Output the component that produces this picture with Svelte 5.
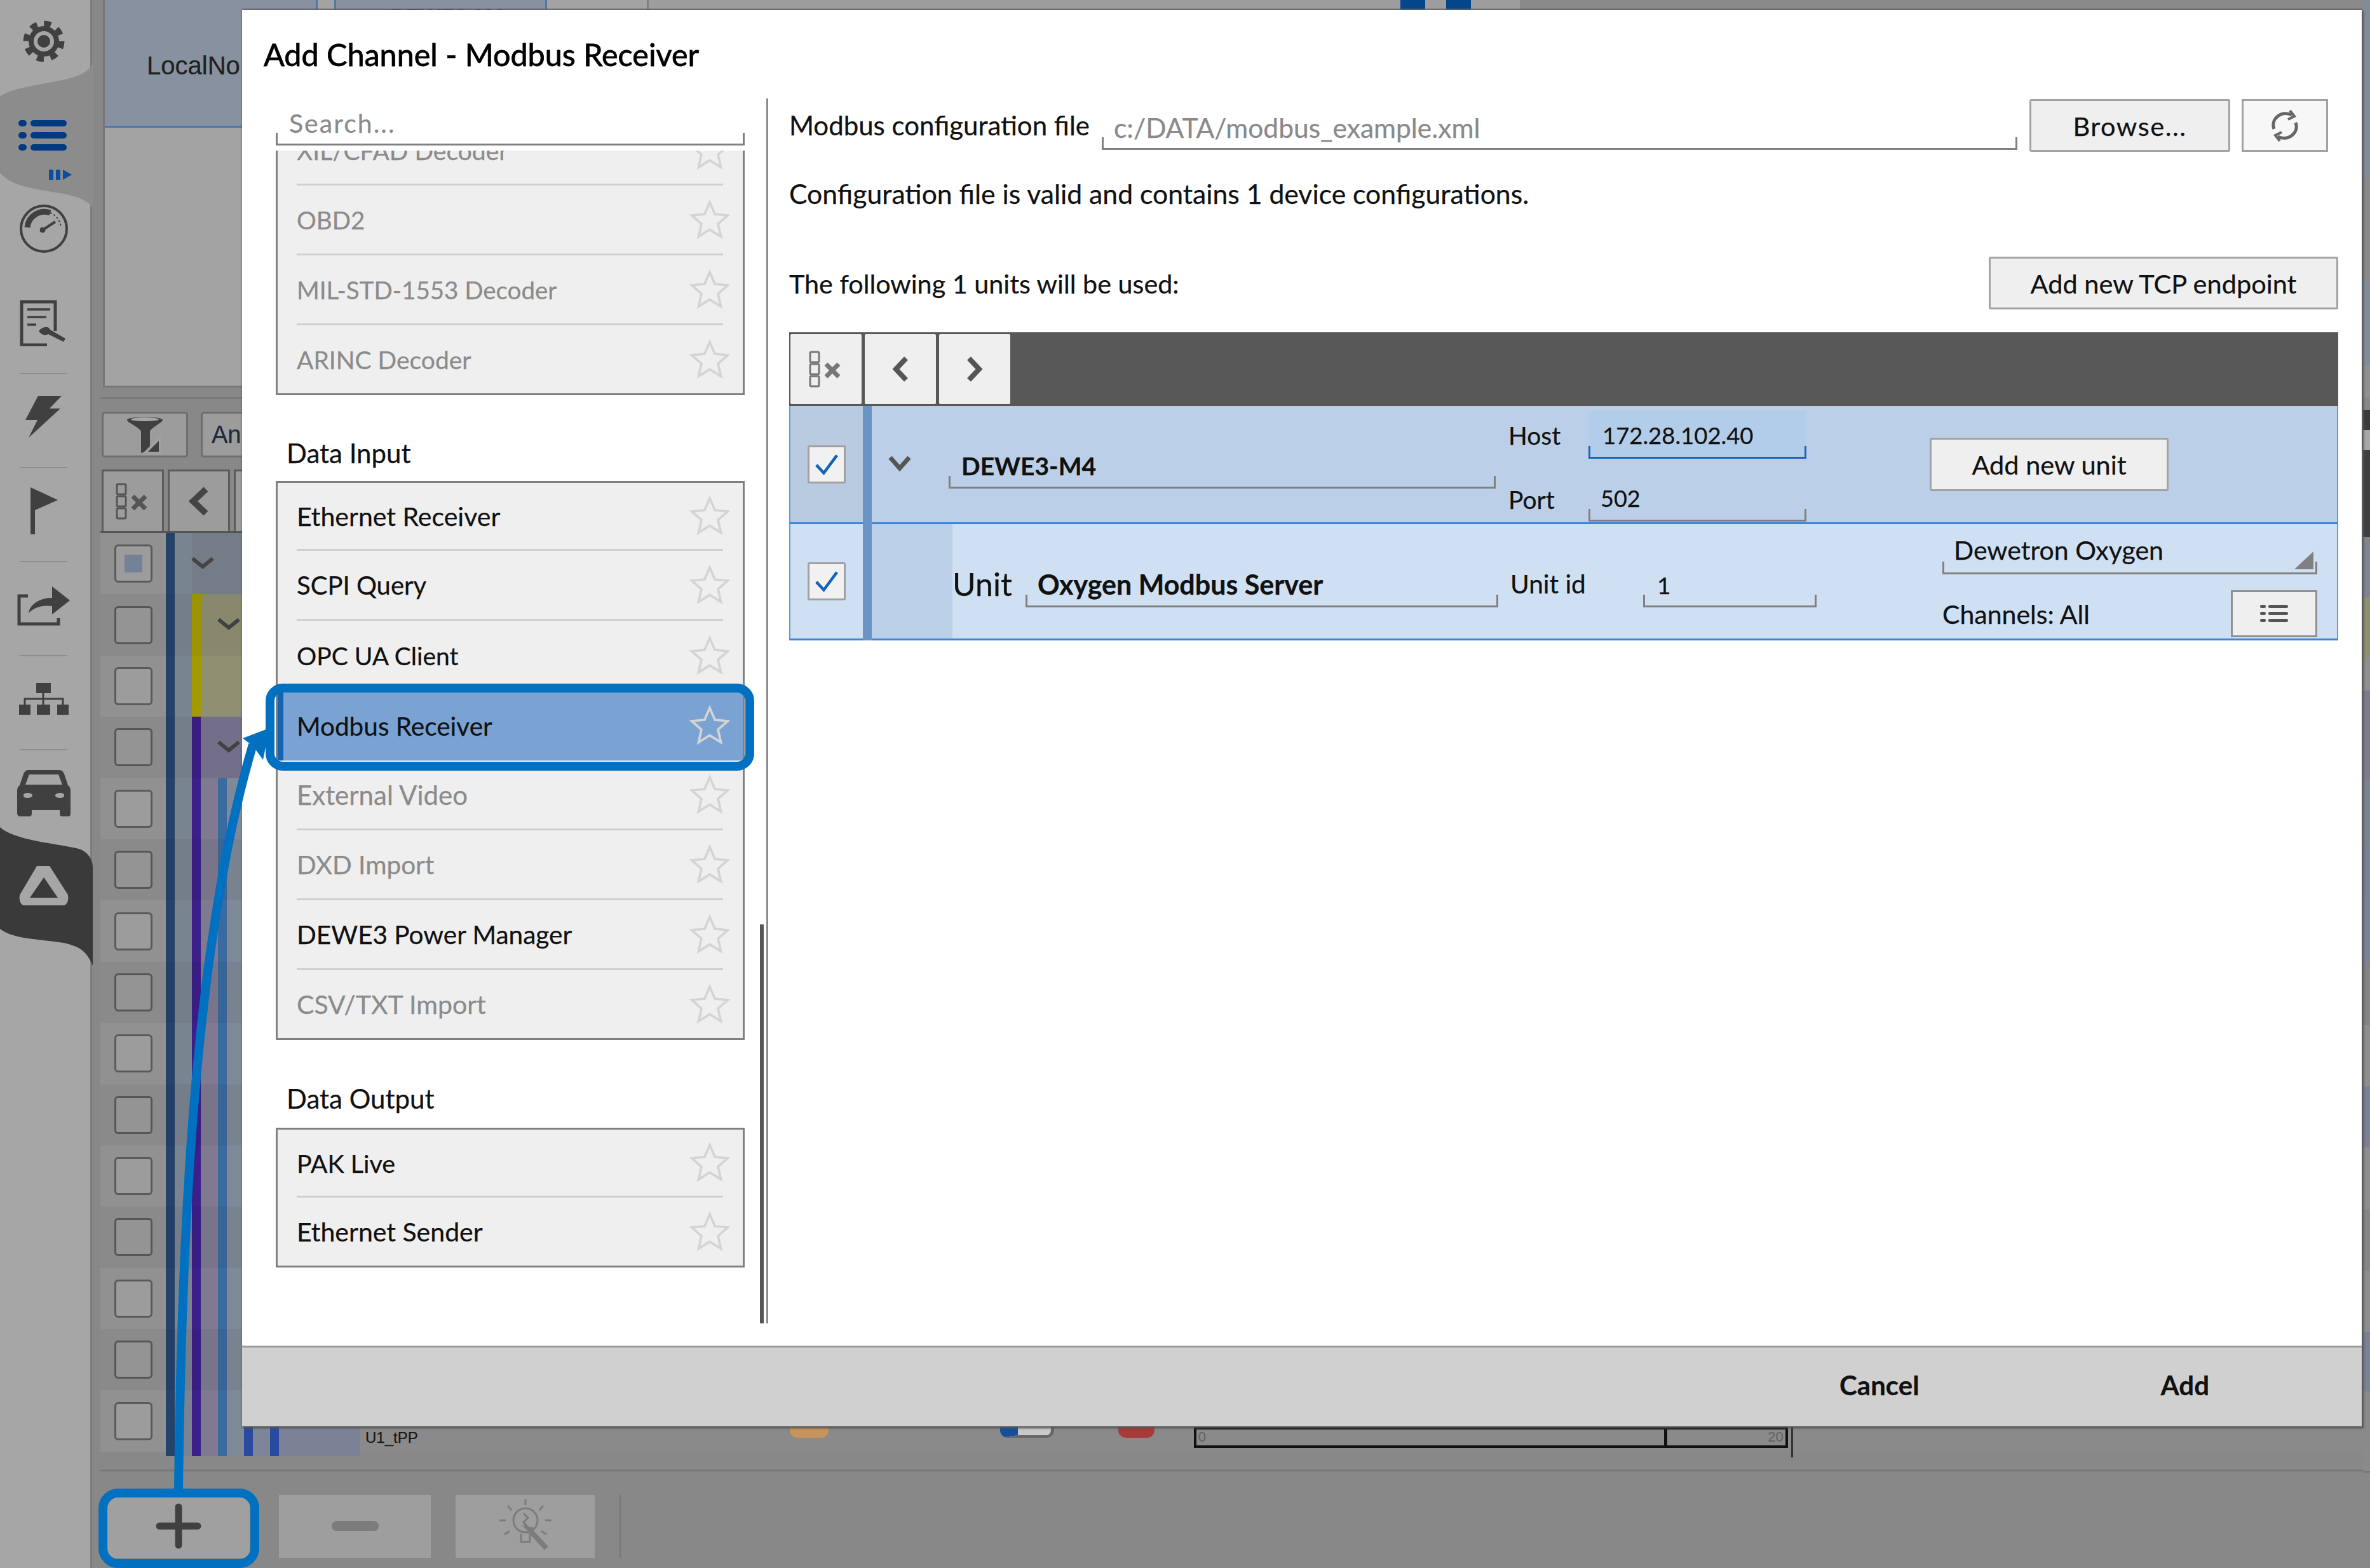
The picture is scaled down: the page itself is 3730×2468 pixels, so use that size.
<script>
	const listA = [
		{ name: 'XIL/CFAD Decoder', size: 39 },
		{ name: 'OBD2', size: 38.5 },
		{ name: 'MIL-STD-1553 Decoder', size: 38.5 },
		{ name: 'ARINC Decoder', size: 39 }
	];
	const listB = [
		{ name: 'Ethernet Receiver', size: 41, on: true },
		{ name: 'SCPI Query', size: 40, on: true },
		{ name: 'OPC UA Client', size: 39, on: true },
		{ name: 'Modbus Receiver', size: 40.5, on: true, selected: true },
		{ name: 'External Video', size: 42 },
		{ name: 'DXD Import', size: 40.5 },
		{ name: 'DEWE3 Power Manager', size: 40.5, on: true },
		{ name: 'CSV/TXT Import', size: 41 }
	];
	const listC = [
		{ name: 'PAK Live', size: 39.5, on: true },
		{ name: 'Ethernet Sender', size: 41, on: true }
	];

	// stripes of the channel tree behind the dialog
	const base = [[14, '#24436a'], [27, '#7a8490']];
	const group = [...base, [14, '#3c1f8a'], [27, '#7f7a90'], [14, '#3a6aa0'], [27, '#7f8a98']];
	const treeRows = Array.from({ length: 15 }, (_, i) => {
		if (i === 0) return { stripes: [...base, [300, '#747c87']], chev: 0 };
		if (i < 3) return { stripes: [...base, [14, '#a39a00'], [300, '#8f8f72']], chev: i === 1 ? 1 : -1 };
		if (i === 3) return { stripes: [...base, [14, '#3c1f8a'], [300, '#7a7590']], chev: 1 };
		if (i === 14) return { stripes: [...group, [14, '#2a4aa0'], [27, '#7f8598'], [14, '#2a4aa0'], [128, '#7b8296']], chev: -1 };
		return { stripes: group, chev: -1 };
	});

	// colour bands seen in the thin gap right of the dialog
	const edge = [
		[280, '#7f8d9b'], [161, '#8a8a8a'], [134, '#7f8d9b'], [50, '#909090'], [20, '#888'],
		[32, '#3a3a3a'], [31, '#a8a8a8'], [137, '#3f3f3f'], [95, '#7e8590'], [95, '#8f8f72'],
		[52, '#8f8f8f'], [141, '#7f7a90'], [98, '#7a8490'], [96, '#7b8296'], [95, '#7b8296'],
		[96, '#848484'], [97, '#8e8e8e'], [96, '#7b8296'], [97, '#8e8e8e'], [97, '#868686'],
		[96, '#8e8e8e'], [94, '#7b8296'], [125, '#8a8a8a'], [3, '#777'], [150, '#888']
	];
</script>

{#snippet star()}
	<svg class="star" viewBox="0 0 60 60"><path d="M30 4l7.6 17.6 19 1.8-14.4 12.6 4.3 18.7L30 44.4 13.5 54.7l4.3-18.7L3.4 23.4l19-1.8z" /></svg>
{/snippet}

{#snippet entry(it)}
	<div class="item" class:off={!it.on} class:selected={it.selected}>
		<div class="inner"><span style="font-size:{it.size}px">{it.name}</span>{@render star()}</div>
	</div>
{/snippet}

{#snippet colsIcon(color)}
	<svg class="cols" viewBox="0 0 60 60" fill="none" stroke={color}>
		<rect x="5" y="3" width="14" height="16" rx="2" stroke-width="3" />
		<rect x="5" y="22" width="14" height="16" rx="2" stroke-width="3" />
		<rect x="5" y="41" width="14" height="16" rx="2" stroke-width="3" />
		<path d="M30 22l20 20M50 22L30 42" stroke-width="7" />
	</svg>
{/snippet}

{#snippet check()}
	<span class="check">
		<svg viewBox="0 0 60 60" fill="none"><path d="M12 31l13 14 23-31" stroke="#1264b8" stroke-width="5" /></svg>
	</span>
{/snippet}

<div class="screen">
	<aside class="sidebar">
		<svg class="tab" viewBox="0 0 146 1530" fill="#8c8c8c">
			<path d="M0 152C20 135 100 130 125 118 138 112 146 105 146 95L146 330C144 318 125 310 100 305 60 298 20 295 0 272Z" />
			<path fill="#3a3a3a" d="M0 1302C20 1322 90 1328 120 1335 135 1338 146 1350 146 1365L146 1520C135 1495 125 1490 100 1484 60 1478 20 1478 0 1462Z" />
		</svg>
		<div class="nav" style="height:130px">
			<svg width="70" height="66" viewBox="0 0 70 66" fill="#404040">
				<circle cx="35" cy="33" r="24" />
				<circle cx="35" cy="33" r="28" fill="none" stroke="#404040" stroke-width="9" stroke-dasharray="11 11" />
				<circle cx="35" cy="33" r="16" fill="#a6a6a6" />
				<circle cx="35" cy="33" r="10" />
			</svg>
		</div>
		<div class="nav active" style="height:170px">
			<svg width="90" height="100" viewBox="0 0 90 100" fill="#003a80">
				<rect x="0" y="0" width="13" height="10" rx="5" /><rect x="19" y="0" width="57" height="10" rx="5" />
				<rect x="0" y="19" width="13" height="10" rx="5" /><rect x="19" y="19" width="57" height="10" rx="5" />
				<rect x="0" y="38" width="13" height="10" rx="5" /><rect x="19" y="38" width="57" height="10" rx="5" />
				<rect x="48" y="78" width="7" height="16" fill="#0a4f9e" /><rect x="59" y="78" width="7" height="16" fill="#0a4f9e" />
				<path d="M70 78l14 8-14 8z" fill="#0a4f9e" />
			</svg>
		</div>
		<div class="nav" style="height:141px;padding-bottom:22px">
			<svg width="80" height="80" viewBox="0 0 80 80" fill="none" stroke="#404040">
				<circle cx="40" cy="40" r="36" stroke-width="4" />
				<path d="M14 38A27 27 0 0 1 50 15" stroke-width="9" />
				<path d="M50 15A27 27 0 0 1 67 38" stroke-width="2" stroke-dasharray="3 3" />
				<path d="M38 42l20-13" stroke-width="4" /><circle cx="38" cy="42" r="4" fill="#404040" />
			</svg>
		</div>
		<div class="nav sep">
			<svg width="76" height="74" viewBox="0 0 76 74" fill="none" stroke="#404040">
				<path d="M56 50V4H3v68h40" stroke-width="5" />
				<path d="M12 16h36M12 28h30M12 40h14" stroke-width="3.5" />
				<path d="M30 50c6-8 16-8 18-2l24 14-3 5-24-12c-6 3-12 0-15-5z" fill="#404040" stroke="none" />
			</svg>
		</div>
		<div class="nav sep">
			<svg width="58" height="68" viewBox="0 0 58 68" fill="#404040"><path d="M20 1h37L38 21h17L5 67l14-28H0z" /></svg>
		</div>
		<div class="nav sep">
			<svg width="44" height="74" viewBox="0 0 44 74" fill="#404040"><path d="M1 0l43 20L8 36v38H1z" /></svg>
		</div>
		<div class="nav sep">
			<svg width="84" height="68" viewBox="0 0 84 68" fill="none" stroke="#404040">
				<path d="M17 20H3v44h62v-9" stroke-width="5" />
				<path d="M18 47c2-14 18-24 37-24V5l28 22-28 22V36c-16-2-28 2-37 11z" fill="#404040" stroke="none" />
			</svg>
		</div>
		<div class="nav sep">
			<svg width="78" height="50" viewBox="0 0 78 50" fill="#404040">
				<rect x="27" y="0" width="23" height="16" /><rect x="0" y="34" width="18" height="16" />
				<rect x="28" y="34" width="21" height="16" /><rect x="60" y="34" width="18" height="16" />
				<path d="M38 16v18M9 34v-9h60v9" fill="none" stroke="#404040" stroke-width="3" />
			</svg>
		</div>
		<div class="nav sep last">
			<svg width="84" height="76" viewBox="0 0 84 76" fill="#404040">
				<path fill-rule="evenodd" d="M18 2h48c4 0 6 2 8 6l6 18c3 2 4 5 4 9v35c0 3-1 5-4 5h-9c-3 0-4-2-4-5v-5H23v5c0 3-1 5-4 5H5c-3 0-5-2-5-5V35c0-4 1-7 4-9l6-18c2-4 4-6 8-6zm1 7l-6 16h58l-6-16zM16 38c-3 0-6 1-6 4s3 4 6 4 8-1 8-4-5-4-8-4zm52 0c-3 0-8 1-8 4s5 4 8 4 6-1 6-4-3-4-6-4z" />
			</svg>
		</div>
		<div class="nav delta">
			<svg width="78" height="66" viewBox="0 0 78 66"><path fill="#a6a6a6" fill-rule="evenodd" d="M28 2h20l28 44c3 5 1 18-6 18H8C1 64-1 51 2 46zM39 20L17 52h44z" /></svg>
		</div>
	</aside>

	<main class="main">
		<section class="top">
			<div class="node"><span>LocalNo</span></div>
			<div class="node second"><b>DEWE3-M4</b></div>
			<div class="slot"></div>
			<div class="blocks"><i></i><i></i></div>
			<div class="top-rest"></div>
		</section>

		<div class="bar-one">
			<span class="old-btn filter">
				<svg width="56" height="62" viewBox="0 0 56 62" fill="#404040">
					<path d="M0 8C0 2 56 2 56 8 56 12 38 20 36 26v30L22 60V26C20 20 0 12 0 8z" />
					<ellipse cx="28" cy="7" rx="22" ry="3" fill="#a6a6a6" />
					<path d="M28 60l24-24v24z" fill="#404040" stroke="#a0a0a0" stroke-width="4" />
				</svg>
			</span>
			<span class="old-btn an">An</span>
		</div>
		<div class="bar-two">
			<span class="old-tool">{@render colsIcon('#555')}</span>
			<span class="old-tool"><svg width="34" height="46" viewBox="0 0 34 46" fill="none" stroke="#444" stroke-width="10"><path d="M28 4L8 23l20 19" /></svg></span>
			<span class="old-tool"></span>
		</div>

		<div class="tree">
			{#each treeRows as row, i}
				<div class="tree-row">
					<div class="cell"><span class="old-check" class:mixed={i === 0}></span></div>
					<div class="stripes">
						{#each row.stripes as s}<span style="width:{s[0]}px;background:{s[1]}"></span>{/each}
						{#if row.chev >= 0}
							<svg class="tree-chev" style="left:{row.chev ? 81 : 40}px" width="36" height="20" viewBox="0 0 36 20" fill="none" stroke="#444" stroke-width="6"><path d="M2 3l16 13L34 3" /></svg>
						{/if}
					</div>
					{#if i === 14}
						<span class="chan">U1_tPP</span>
						<span class="dot orange"></span>
						<span class="dot tick"></span>
						<span class="dot blue"></span>
						<span class="dot red"></span>
						<span class="meter"><span>0</span><i></i><span class="end">20</span></span>
						<span class="cursor"></span>
					{/if}
				</div>
			{/each}
		</div>

		<div class="rule"></div>

		<div class="bottom">
			<span class="low-btn plus"><svg width="72" height="72" viewBox="0 0 72 72" stroke="#404040" stroke-width="11" stroke-linecap="round"><path d="M6 36h60M36 6v60" /></svg></span>
			<span class="low-btn minus"><svg width="74" height="16" viewBox="0 0 74 16"><rect width="74" height="16" rx="8" fill="#7c7c7c" /></svg></span>
			<span class="low-btn bulb">
				<svg width="86" height="90" viewBox="0 0 86 90" fill="none" stroke="#7c7c7c" stroke-width="3">
					<circle cx="43" cy="36" r="19" />
					<path d="M36 57v13h14V57M43 3v9M15 13l6 7M71 13l-6 7M2 36h10M74 36h10M10 58l8-5M76 58l-8-5M40 25l7 7-7 7 6 7" />
					<path d="M50 52l26 28" stroke-width="8" /><path d="M42 46l12 2 2 12z" fill="#7c7c7c" />
				</svg>
			</span>
			<span class="low-sep"></span>
		</div>
	</main>

	<div class="edge">
		{#each edge as e}<span style="height:{e[0]}px;background:{e[1]}"></span>{/each}
	</div>

	<div class="dialog">
		<h1>Add Channel - Modbus Receiver</h1>
		<div class="body">
			<div class="left">
				<div class="search field"><span>Search...</span></div>
				<div class="scroll">
					<div class="panel first">
						{#each listA as it}{@render entry(it)}{/each}
					</div>
					<h2 class="h-input">Data Input</h2>
					<div class="panel">
						{#each listB as it}{@render entry(it)}{/each}
					</div>
					<h2>Data Output</h2>
					<div class="panel">
						{#each listC as it}{@render entry(it)}{/each}
					</div>
				</div>
				<div class="scrollbar"></div>
			</div>

			<div class="right">
				<div class="file-row">
					<span class="label">Modbus configuration file</span>
					<div class="field path"><span>c:/DATA/modbus_example.xml</span></div>
					<button class="browse">Browse...</button>
					<button class="refresh">
						<svg width="54" height="50" viewBox="0 0 54 50" fill="none" stroke="#666" stroke-width="5">
							<path d="M10 30C4 14 22 0 38 8" /><path d="M44 20c6 16-12 30-28 22" />
							<path d="M35 1l7 9-10 5M19 49l-7-9 10-5" stroke-width="4" />
						</svg>
					</button>
				</div>
				<p class="valid">Configuration file is valid and contains 1 device configurations.</p>
				<div class="used-row">
					<span class="used">The following 1 units will be used:</span>
					<button class="tcp">Add new TCP endpoint</button>
				</div>

				<div class="table">
					<div class="toolbar">
						<span class="tool">{@render colsIcon('#777')}</span>
						<span class="tool"><svg width="30" height="40" viewBox="0 0 30 40" fill="none" stroke="#555" stroke-width="8"><path d="M24 3L8 20l16 17" /></svg></span>
						<span class="tool"><svg width="30" height="40" viewBox="0 0 30 40" fill="none" stroke="#555" stroke-width="8"><path d="M6 3l16 17L6 37" /></svg></span>
					</div>

					<div class="unit device">
						<div class="tick-cell">{@render check()}</div>
						<div class="stem"></div>
						<div class="expand"><svg width="36" height="26" viewBox="0 0 36 26" fill="none" stroke="#555" stroke-width="7"><path d="M3 4l15 17L33 4" /></svg></div>
						<div class="field name"><b>DEWE3-M4</b></div>
						<div class="conn">
							<span>Host</span>
							<div class="field host"><span>172.28.102.40</span></div>
							<span class="port">Port</span>
							<div class="field portval"><span>502</span></div>
						</div>
						<button class="new-unit">Add new unit</button>
					</div>

					<div class="unit server">
						<div class="tick-cell">{@render check()}</div>
						<div class="stem"></div>
						<div class="gutter"></div>
						<span class="unit-word">Unit</span>
						<div class="field unit-name"><b>Oxygen Modbus Server</b></div>
						<span class="unit-id">Unit id</span>
						<div class="field id-val"><span>1</span></div>
						<div class="options">
							<div class="field select"><span>Dewetron Oxygen</span><i></i></div>
							<div class="channels">
								<span>Channels: All</span>
								<button class="list-btn">
									<svg width="44" height="28" viewBox="0 0 44 28" fill="#555">
										<rect y="0" width="9" height="5" rx="2.5" /><rect x="13" y="0" width="31" height="5" rx="2.5" />
										<rect y="11" width="9" height="5" rx="2.5" /><rect x="13" y="11" width="31" height="5" rx="2.5" />
										<rect y="22" width="9" height="5" rx="2.5" /><rect x="13" y="22" width="31" height="5" rx="2.5" />
									</svg>
								</button>
							</div>
						</div>
					</div>
				</div>
			</div>
		</div>
		<footer>
			<span>Cancel</span>
			<span>Add</span>
		</footer>
	</div>

	<!-- callouts drawn on top of the screenshot -->
	<svg class="callouts" width="3730" height="2468" viewBox="0 0 3730 2468" fill="none" stroke="#0070c0" stroke-width="14">
		<rect x="425" y="1083" width="755" height="123" rx="20" />
		<rect x="162" y="2350" width="239" height="111" rx="24" />
		<path d="M281 2345C285 2000 300 1500 398 1172" />
		<path d="M382 1162L424 1146 414 1196 398 1174Z" fill="#0070c0" stroke="none" />
	</svg>
</div>

<style>
	:global(body) {
		margin: 0;
	}

	.screen {
		position: relative;
		display: flex;
		width: 3730px;
		height: 2468px;
		overflow: hidden;
		background: #888;
		font-family: "Lato", "Noto Sans", sans-serif;
		font-size: 41px;
		color: #111;
		-webkit-text-stroke: 0.25px currentColor;
	}

	/* left rail */
	.sidebar {
		position: relative;
		flex: none;
		width: 142px;
		height: 2468px;
		background: #a6a6a6;
		border-right: 3px solid #7c7c7c;
	}

	.tab {
		position: absolute;
		left: 0;
		top: 0;
		width: 146px;
		height: 1530px;
	}

	.nav {
		position: relative;
		display: flex;
		align-items: center;
		justify-content: center;
		box-sizing: border-box;
		padding-right: 4px;
	}

	.active {
		padding: 48px 0 0 0;
		padding-left: 6px;
	}

	.sep {
		height: 148px;
		padding-bottom: 14px;
	}

	.sep::after {
		content: '';
		position: absolute;
		left: 31px;
		right: 36px;
		bottom: 0;
		border-bottom: 2px solid #8e8e8e;
	}

	.last::after {
		display: none;
	}

	.delta {
		height: 290px;
		padding-bottom: 190px;
		padding-top: 30px;
	}

	/* app behind the dialog */
	.main {
		flex: none;
		width: 3574px;
		height: 2468px;
		display: flex;
		flex-direction: column;
		padding-left: 13px;
		box-sizing: border-box;
	}

	.top {
		display: flex;
		flex: none;
		height: 610px;
		box-sizing: border-box;
		border-left: 3px solid #777;
		border-bottom: 3px solid #777;
		background: #a3a3a3;
		margin-left: 4px;
	}

	.node {
		flex: none;
		width: 335px;
		height: 201px;
		box-sizing: border-box;
		background: #87919f;
		border-bottom: 3px solid #4a78b0;
		border-right: 3px solid #4a78b0;
		padding: 81px 0 0 66px;
		font-family: "Liberation Sans", sans-serif;
		font-size: 40px;
		color: #20201c;
		white-space: nowrap;
		overflow: hidden;
	}

	.second {
		margin-left: 26px;
		border-left: 3px solid #4a78b0;
		padding: 6px 0 0 85px;
		font-size: 34px;
		color: #111;
	}

	.slot {
		flex: none;
		width: 157px;
		border-right: 3px solid #808080;
	}

	.blocks {
		flex: none;
		display: flex;
		width: 1371px;
		padding-left: 1183px;
		gap: 33px;
		box-sizing: border-box;
		background: #9e9e9e;
	}

	.blocks i {
		width: 39px;
		height: 40px;
		background: #04468c;
	}

	.top-rest {
		flex: 1;
		background: #8a8a8a;
	}

	.bar-one {
		margin-top: 15px;
		border-top: 3px solid #7a7a7a;
		padding: 20px 0 0 2px;
		display: flex;
		gap: 20px;
		height: 92px;
		box-sizing: content-box;
	}

	.old-btn {
		display: flex;
		align-items: center;
		justify-content: center;
		height: 72px;
		box-sizing: border-box;
		background: #9c9c9c;
		border: 3px solid #6e6e6e;
		border-radius: 5px;
	}

	.filter {
		width: 136px;
	}

	.an {
		width: 300px;
		justify-content: flex-start;
		padding-left: 14px;
		font-family: "Liberation Sans", sans-serif;
		font-size: 38px;
		color: #1d2a3c;
	}

	.bar-two {
		display: flex;
		gap: 6px;
		height: 100px;
		margin-top: -1px;
		padding-left: 2px;
		border-bottom: 3px solid #555;
		box-sizing: border-box;
	}

	.old-tool {
		display: flex;
		align-items: center;
		justify-content: center;
		width: 98px;
		box-sizing: border-box;
		background: #9c9c9c;
		border: 3px solid #5c5c5c;
		border-bottom: 0;
	}

	.cols {
		width: 60px;
		height: 60px;
	}

	.tree {
		flex: none;
	}

	.tree-row {
		position: relative;
		display: flex;
		height: 96.4px;
		background: #8a8a8a;
	}

	.tree-row:nth-child(even) {
		background: #848484;
	}

	.tree-row:nth-child(even) .stripes,
	.tree-row:nth-child(even) .cell {
		filter: brightness(0.95);
	}

	.cell {
		flex: none;
		width: 103px;
		display: flex;
		align-items: center;
		justify-content: center;
		background: #919191;
	}

	.old-check {
		width: 60px;
		height: 60px;
		box-sizing: border-box;
		background: #9c9c9c;
		border: 3px solid #5a5a5a;
		border-radius: 6px;
	}

	.mixed {
		background:
			linear-gradient(#738296, #738296) center / 28px 28px no-repeat,
			#9c9c9c;
	}

	.stripes {
		position: relative;
		display: flex;
		flex: none;
		width: 307px;
		height: 100%;
	}

	.stripes span {
		flex: none;
		height: 100%;
	}

	.tree-row:last-child .stripes {
		height: 104px;
	}

	.tree-chev {
		position: absolute;
		top: 37px;
	}

	.chan {
		margin: 60px 0 0 7px;
		font-family: "Liberation Sans", sans-serif;
		font-size: 24px;
		line-height: 30px;
		color: #181818;
	}

	.dot {
		flex: none;
		align-self: flex-end;
		margin-bottom: 22px;
		height: 60px;
	}

	.orange {
		width: 61px;
		margin-left: 585px;
		background: #c8945c;
		border-radius: 0 0 12px 12px;
	}

	.tick {
		width: 4px;
		height: 30px;
		margin-left: 138px;
		margin-bottom: 42px;
		background: #666;
	}

	.blue {
		width: 85px;
		margin-left: 128px;
		box-sizing: border-box;
		background: #c9c9c9;
		border-left: 28px solid #12509c;
		border-right: 5px solid #666;
		border-bottom: 4px solid #666;
		border-radius: 0 0 12px 12px;
	}

	.red {
		width: 57px;
		margin-left: 101px;
		background: #a83a38;
		border-radius: 0 0 12px 12px;
	}

	.meter {
		flex: none;
		align-self: flex-end;
		position: relative;
		display: flex;
		justify-content: space-between;
		align-items: center;
		width: 935px;
		height: 33px;
		margin: 0 0 6px 62px;
		box-sizing: border-box;
		border: 4px solid #111;
		font-family: "Liberation Sans", sans-serif;
		font-size: 22px;
		color: #666;
		padding: 0 3px;
	}

	.meter i {
		position: absolute;
		left: 736px;
		top: 0;
		width: 5px;
		height: 100%;
		background: #111;
	}

	.cursor {
		flex: none;
		width: 3px;
		height: 60px;
		align-self: flex-end;
		margin: 0 0 -9px 5px;
		background: #333;
	}

	.rule {
		margin-top: 28px;
		height: 3px;
		background: #777;
	}

	.bottom {
		display: flex;
		gap: 39px;
		padding: 37px 0 0 11px;
	}

	.low-btn {
		display: flex;
		align-items: center;
		justify-content: center;
		height: 99px;
		background: #a0a0a0;
	}

	.plus {
		width: 224px;
		margin-right: 7px;
	}

	.minus {
		width: 239px;
		background: #9e9e9e;
	}

	.bulb {
		width: 219px;
		background: #9e9e9e;
	}

	.low-sep {
		width: 2px;
		height: 99px;
		background: #777;
	}

	.edge {
		flex: none;
		width: 11px;
		display: flex;
		flex-direction: column;
	}

	.edge span {
		flex: none;
	}

	/* dialog */
	.dialog {
		position: absolute;
		left: 381px;
		top: 16px;
		width: 3336px;
		height: 2229px;
		display: flex;
		flex-direction: column;
		background: #fff;
		box-shadow: 2px 2px 3px 1px #555, 0 -2px 2px #666;
	}

	h1 {
		flex: none;
		height: 139px;
		margin: 0;
		padding: 43px 0 0 34px;
		box-sizing: border-box;
		font-size: 48.5px;
		font-weight: 400;
		line-height: 52px;
		color: #000;
		-webkit-text-stroke: 0.8px #000;
	}

	.body {
		flex: 1;
		display: flex;
		min-height: 0;
	}

	.left {
		position: relative;
		flex: none;
		width: 828px;
		height: 1928px;
		padding-left: 53px;
		box-sizing: border-box;
		border-right: 3px solid #8a8a8a;
	}

	.field {
		position: relative;
		display: flex;
		align-items: flex-end;
		box-sizing: border-box;
		border-bottom: 3px solid #808080;
	}

	.field::before,
	.field::after {
		content: '';
		position: absolute;
		bottom: 0;
		width: 3px;
		height: 17px;
		background: #808080;
	}

	.field::before {
		left: 0;
	}

	.field::after {
		right: 0;
	}

	.search {
		width: 738px;
		height: 74px;
		padding: 0 0 8px 21px;
		color: #8a8a8a;
		letter-spacing: 2px;
	}

	.scroll {
		width: 738px;
		height: 1846px;
		margin-top: 8px;
		overflow: hidden;
	}

	.panel {
		box-sizing: border-box;
		width: 738px;
		border: 3px solid #808080;
		background: #efefef;
	}

	.panel.first {
		margin-top: -55px;
	}

	.item {
		height: 110px;
		padding: 0 31px 0 30px;
		box-sizing: border-box;
	}

	.item:first-child,
	.item:last-child {
		height: 107px;
	}

	.inner {
		display: flex;
		align-items: center;
		justify-content: space-between;
		height: 100%;
		box-sizing: border-box;
		border-bottom: 3px solid #cfcfcf;
	}

	.item:last-child .inner,
	.item.selected .inner {
		border-bottom: 0;
	}

	.item:has(+ .selected) .inner {
		border-bottom: 0;
	}

	.off {
		color: #8b8b8b;
	}

	.selected {
		background: #7aa3d3;
		border-left: 9px solid #1563b4;
		padding-left: 21px;
	}

	.star {
		width: 64px;
		height: 64px;
		margin-right: -11px;
		fill: none;
		stroke: #d4d4d4;
		stroke-width: 3.5;
	}

	h2 {
		margin: 0;
		height: 138px;
		padding: 67px 0 0 17px;
		box-sizing: border-box;
		font-size: 42px;
		font-weight: 400;
		line-height: 50px;
	}

	.h-input {
		height: 135px;
		padding-top: 66px;
	}

	.scrollbar {
		position: absolute;
		right: 4px;
		bottom: 0;
		width: 6px;
		height: 628px;
		background: #555;
	}

	.right {
		flex: 1;
		padding: 1px 37px 0 33px;
		min-width: 0;
	}

	button {
		display: block;
		padding: 0;
		box-sizing: border-box;
		background: #efefef;
		border: 3px solid #a2a2a2;
		border-radius: 3px;
		font: inherit;
		font-size: 41.5px;
		color: #111;
		-webkit-text-stroke: inherit;
	}

	.file-row {
		display: flex;
		align-items: flex-start;
		height: 83px;
	}

	.label {
		width: 492px;
		flex: none;
		padding-top: 16px;
		line-height: 50px;
		font-size: 42px;
		white-space: nowrap;
	}

	.path {
		width: 1441px;
		height: 62px;
		margin-top: 18px;
		padding: 0 0 7px 19px;
		color: #8a8a8a;
		font-size: 42.5px;
	}

	.browse {
		width: 316px;
		height: 83px;
		margin-left: 19px;
		letter-spacing: 1.5px;
	}

	.refresh {
		display: flex;
		align-items: center;
		justify-content: center;
		width: 136px;
		height: 83px;
		margin-left: 18px;
		background: #f7f7f7;
		border-radius: 0;
	}

	.valid {
		margin: 41px 0 0;
		line-height: 50px;
		font-size: 42.7px;
	}

	.used {
		font-size: 41.3px;
	}

	.used-row {
		display: flex;
		align-items: center;
		justify-content: space-between;
		margin-top: 74px;
	}

	.tcp {
		width: 550px;
		height: 83px;
	}

	.table {
		margin-top: 36px;
		width: 2438px;
	}

	.toolbar {
		display: flex;
		gap: 5px;
		height: 116px;
		padding: 3px 2px;
		box-sizing: border-box;
		background: #585858;
	}

	.tool {
		display: flex;
		align-items: center;
		justify-content: center;
		width: 112px;
		background: #efefef;
		border-radius: 2px;
	}

	.unit {
		display: flex;
		box-sizing: border-box;
		border-right: 2px solid #5b9be0;
		border-left: 2px solid #5b9be0;
		border-bottom: 3px solid #3a86da;
	}

	.device {
		height: 186px;
		background: #bbd0e8;
	}

	.server {
		height: 183px;
		background: #cfe0f3;
	}

	.tick-cell {
		flex: none;
		display: flex;
		align-items: center;
		justify-content: center;
		width: 114px;
	}

	.device .tick-cell {
		background: #b9cbe0;
	}

	.check {
		display: block;
		width: 60px;
		height: 60px;
		box-sizing: border-box;
		background: #f1f1f1;
		border: 3px solid #a0a0a0;
		border-radius: 3px;
	}

	.check svg {
		display: block;
		width: 54px;
		height: 54px;
	}

	.stem {
		flex: none;
		width: 14px;
		margin-bottom: -3px;
		background: #6a94c6;
	}

	.expand {
		flex: none;
		display: flex;
		justify-content: center;
		width: 88px;
		padding: 77px 33px 0 0;
		box-sizing: content-box;
		height: 40px;
	}

	.name {
		flex: none;
		width: 861px;
		height: 60px;
		margin-top: 70px;
		padding: 0 0 10px 20px;
		font-size: 39px;
	}

	b {
		font-weight: 700;
	}

	.conn {
		flex: none;
		display: grid;
		grid-template-columns: 126px 343px;
		grid-template-rows: 75px 71px;
		row-gap: 28px;
		align-items: center;
		margin: 8px 0 0 20px;
		height: 174px;
		font-size: 39px;
	}

	.port {
		margin-top: 1px;
	}

	.host {
		height: 75px;
		padding: 0 0 12px 22px;
		background: #b2cdea;
		border-bottom-color: #1565c0;
		font-size: 36.5px;
	}

	.host::before,
	.host::after {
		background: #1565c0;
	}

	.portval {
		height: 71px;
		padding: 0 0 12px 19px;
		font-size: 36px;
	}

	.new-unit {
		flex: none;
		align-self: center;
		width: 376px;
		height: 84px;
		margin-left: 194px;
	}

	.gutter {
		flex: none;
		width: 127px;
		background: #bbd0e8;
	}

	.unit-word {
		flex: none;
		width: 115px;
		padding: 66px 0 0 0;
		box-sizing: border-box;
		font-size: 50px;
		line-height: 56px;
	}

	.unit-name {
		flex: none;
		width: 744px;
		height: 60px;
		margin-top: 71px;
		padding: 0 0 8px 19px;
		font-size: 43px;
	}

	.unit-id {
		flex: none;
		width: 228px;
		padding: 69px 0 0 19px;
		box-sizing: border-box;
		line-height: 50px;
		font-size: 40.5px;
	}

	.id-val {
		flex: none;
		width: 273px;
		height: 60px;
		margin-top: 71px;
		padding: 0 0 10px 22px;
		font-size: 37px;
	}

	.options {
		flex: none;
		width: 590px;
		margin: 19px 0 0 198px;
	}

	.select {
		height: 60px;
		padding: 0 0 11px 18px;
	}

	.select i {
		position: absolute;
		right: 6px;
		bottom: 5px;
		width: 0;
		height: 0;
		border-left: 30px solid transparent;
		border-bottom: 28px solid #808080;
	}

	.channels {
		display: flex;
		align-items: center;
		justify-content: space-between;
		margin-top: 25px;
	}

	.list-btn {
		display: flex;
		align-items: center;
		justify-content: center;
		width: 136px;
		height: 74px;
		border-radius: 0;
		border-color: #909090;
	}

	footer {
		flex: none;
		display: flex;
		align-items: center;
		justify-content: flex-end;
		gap: 380px;
		height: 127px;
		margin-top: auto;
		padding: 0 240px 6px 0;
		box-sizing: border-box;
		background: #d0d0d0;
		border-top: 3px solid #9a9a9a;
		font-weight: 700;
		font-size: 42px;
	}

	.callouts {
		position: absolute;
		left: 0;
		top: 0;
	}
</style>
